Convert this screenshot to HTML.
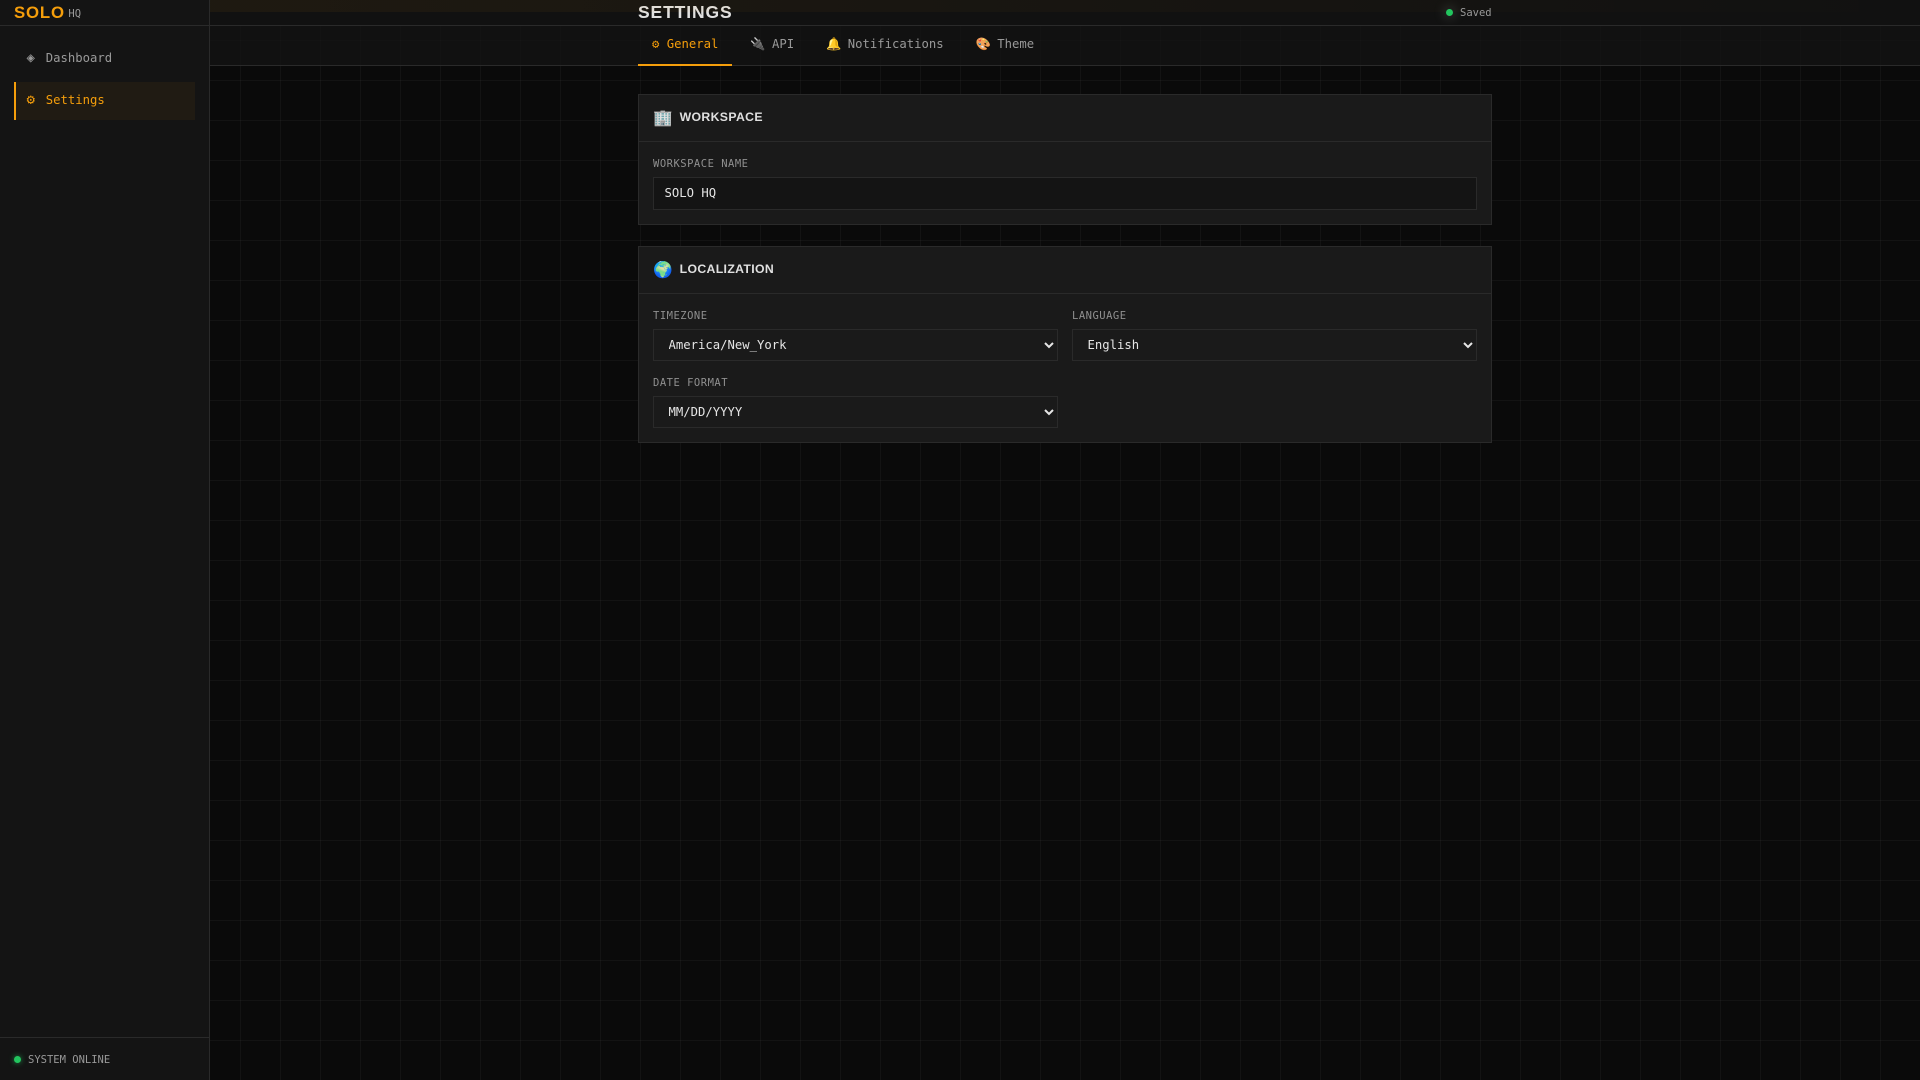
<!DOCTYPE html>
<html lang="en">
<head>
<meta charset="utf-8">
<title>Settings</title>
<style>
*{box-sizing:border-box;margin:0;padding:0}
html{font-size:14px}
html,body{width:1920px;height:1080px;overflow:hidden}
body{position:relative;background-color:#0a0a0a;background-image:linear-gradient(rgba(255,255,255,.035) 1px,transparent 1px),linear-gradient(90deg,rgba(255,255,255,.035) 1px,transparent 1px);background-size:40px 40px;font-family:"DejaVu Sans Mono",monospace;color:#e5e5e5;font-size:12.25px}
aside{position:absolute;left:0;top:0;width:210px;height:1080px;background:#141414;border-right:1px solid #2a2a2a;z-index:3}
.logo{height:26px;border-bottom:1px solid #2a2a2a;padding-left:14px;display:flex;align-items:center}
.logo b{font:bold 16.8px/25px "Liberation Sans",sans-serif;letter-spacing:.84px;color:#f59e0b;margin-right:3.5px}
.logo span{font-size:10.5px;color:#999;position:relative;top:1px}
nav{position:absolute;left:14px;top:40px;width:181px}
nav a{display:block;height:38px;line-height:36px;padding-left:10.5px;color:#9a9a9a;margin-bottom:4px;border-left:2px solid transparent;white-space:pre}
nav a.on{background:rgba(245,158,11,.057);border-left-color:#f59e0b;color:#f59e0b}
nav i{display:inline-block;width:19.2px;font-style:normal;font-size:14px;line-height:36px;vertical-align:top}
.status{position:absolute;left:0;right:0;top:1037px;height:43px;border-top:1px solid #2a2a2a;display:flex;align-items:center;padding-left:14px;font-size:10.5px;color:#999}
.status span.t{position:relative;top:1px}
.dot{display:inline-block;width:7px;height:7px;border-radius:50%;background:#22c55e;box-shadow:0 0 6px rgba(34,197,94,.7);margin-right:7px}
.strip{position:absolute;left:210px;top:0;right:0;height:12px;background:linear-gradient(90deg,rgba(245,158,11,.06),rgba(245,158,11,0));z-index:2}
header{position:absolute;left:210px;right:0;top:0;height:26px;background:#111;border-bottom:1px solid #2a2a2a;z-index:1}
header h1{position:absolute;left:428px;top:0;font:bold 17.5px/25px "Liberation Sans",sans-serif;letter-spacing:.875px;color:#e0e0e0;white-space:nowrap}
.saved{position:absolute;left:1446px;top:0;height:25px;display:flex;align-items:center;font-size:10.5px;color:#999;z-index:3}
.saved .dot{box-shadow:0 0 12px 1px rgba(200,220,200,.3)}
.tabs{position:absolute;left:210px;right:0;top:26px;height:40px;background:rgba(20,20,20,.7);border-bottom:1px solid #2a2a2a}
.tabs div{position:absolute;left:428px;top:0;display:flex;gap:4px}
.tabs a{display:block;height:40px;padding:0 14px;line-height:37px;color:#999;white-space:pre;border-bottom:2px solid transparent}
.tabs a.on{color:#f59e0b;border-bottom-color:#f59e0b}
.tabs s{text-decoration:none;margin-right:-1.05px}
.card{position:absolute;left:638px;width:854px;background:#1a1a1a;border:1px solid #2a2a2a}
.card h2{height:47px;border-bottom:1px solid #2a2a2a;padding-left:14px;display:flex;align-items:center;gap:7px;font:bold 12.25px "Liberation Sans",sans-serif;letter-spacing:.35px;color:#e0e0e0}
.card h2 em{font-style:normal;font-size:15.75px;letter-spacing:0}
.card h2 span{position:relative;top:-1px}
label{position:absolute;font-size:10.5px;letter-spacing:.5px;color:#909090;line-height:14px;white-space:nowrap}
.input{position:absolute;left:14px;width:824px;height:33px;background:#141414;border:1px solid #2a2a2a;color:#e5e5e5;font:12.25px "DejaVu Sans Mono",monospace;padding:0 10.5px 1px;outline:none}
select{position:absolute;width:405px;height:32px;background:#1a1a1a;border:1px solid #2a2a2a;color:#e5e5e5;font:12.25px "DejaVu Sans Mono",monospace;padding:0 10.5px;border-radius:0;outline:none}
</style>
</head>
<body>
<aside>
  <div class="logo"><b>SOLO</b><span>HQ</span></div>
  <nav>
    <a><i>◈</i>Dashboard</a>
    <a class="on"><i>⚙</i>Settings</a>
  </nav>
  <div class="status"><span class="dot"></span><span class="t">SYSTEM ONLINE</span></div>
</aside>
<header><h1>SETTINGS</h1></header>
<div class="strip"></div>
<div class="saved"><span class="dot"></span>Saved</div>
<div class="tabs"><div>
  <a class="on">⚙ General</a>
  <a><s>🔌</s> API</a>
  <a><s>🔔</s> Notifications</a>
  <a><s>🎨</s> Theme</a>
</div></div>

<section class="card" style="top:94px;height:131px">
  <h2><em>🏢</em><span>WORKSPACE</span></h2>
  <label style="left:14px;top:62px">WORKSPACE NAME</label>
  <input class="input" style="top:82px" value="SOLO HQ">
</section>

<section class="card" style="top:246px;height:197px">
  <h2><em>🌍</em><span>LOCALIZATION</span></h2>
  <label style="left:14px;top:62px">TIMEZONE</label>
  <select style="left:14px;top:82px"><option>America/New_York</option></select>
  <label style="left:433px;top:62px">LANGUAGE</label>
  <select style="left:433px;top:82px"><option>English</option></select>
  <label style="left:14px;top:129px">DATE FORMAT</label>
  <select style="left:14px;top:149px"><option>MM/DD/YYYY</option></select>
</section>
</body>
</html>
